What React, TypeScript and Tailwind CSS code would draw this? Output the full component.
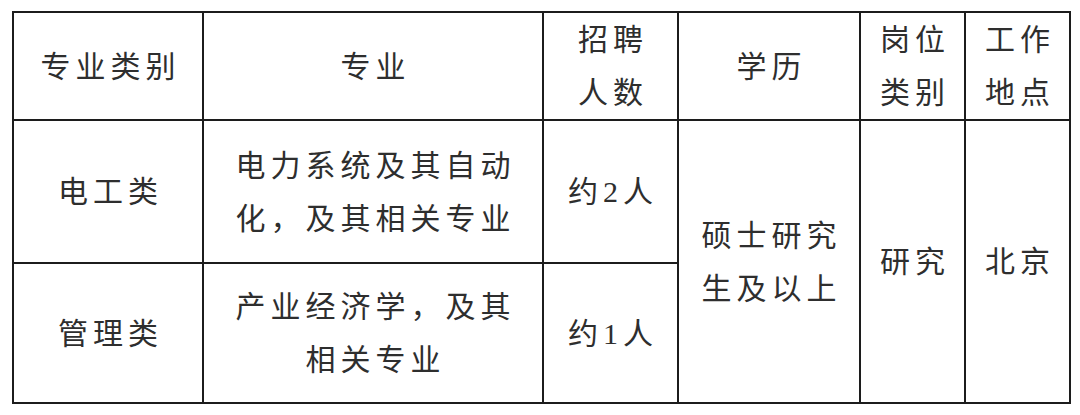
const font = { fontFamily: '"Liberation Serif", "Noto Sans CJK SC", serif' };

function Cell({
  lines,
  className = "",
}: {
  lines: string[];
  className?: string;
}) {
  return (
    <div
      className={`bg-white flex flex-col items-center justify-center text-center text-[30px] leading-[53px] tracking-[5px] pl-[5px] text-[#2e2e2e] ${className}`}
    >
      {lines.map((l) => (
        <div key={l} className="whitespace-nowrap">
          {l}
        </div>
      ))}
    </div>
  );
}

export default function App() {
  return (
    <div className="w-[1080px] h-[415px] bg-white pt-[11px] pl-[12px]" style={font}>
      <div className="inline-grid grid-cols-[188px_338px_133px_180px_103px_103px] grid-rows-[106px_141px_138px] gap-[2px] p-[2px] bg-[#1c1c1c]">
        <Cell lines={["专业类别"]} />
        <Cell lines={["专业"]} />
        <Cell lines={["招聘", "人数"]} />
        <Cell lines={["学历"]} />
        <Cell lines={["岗位", "类别"]} />
        <Cell lines={["工作", "地点"]} />

        <Cell lines={["电工类"]} />
        <Cell lines={["电力系统及其自动", "化，及其相关专业"]} />
        <Cell lines={["约2人"]} />
        <Cell lines={["硕士研究", "生及以上"]} className="row-span-2" />
        <Cell lines={["研究"]} className="row-span-2" />
        <Cell lines={["北京"]} className="row-span-2" />

        <Cell lines={["管理类"]} />
        <Cell lines={["产业经济学，及其", "相关专业"]} />
        <Cell lines={["约1人"]} />
      </div>
    </div>
  );
}
